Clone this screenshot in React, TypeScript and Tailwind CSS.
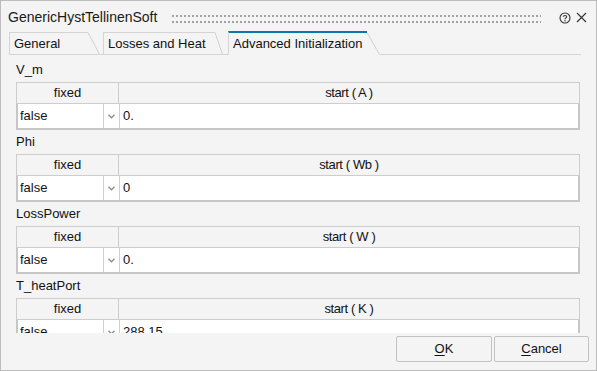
import React from "react";

type Group = { name: string; unit: string; value: string };

const groups: Group[] = [
  { name: "V_m", unit: "A", value: "0." },
  { name: "Phi", unit: "Wb", value: "0" },
  { name: "LossPower", unit: "W", value: "0." },
  { name: "T_heatPort", unit: "K", value: "288.15" },
];

function Slant({ w = 12, color = "#cfcfcf", bottom = true }: { w?: number; color?: string; bottom?: boolean }) {
  return (
    <svg width={w} height={23} className="shrink-0 block">
      <line x1={0} y1={0.5} x2={w - 0.5} y2={22.5} stroke={color} strokeWidth={1} />
      {bottom && <line x1={0} y1={22.5} x2={w} y2={22.5} stroke="#d4d4d4" strokeWidth={1} />}
    </svg>
  );
}

function Tab({ label, width, slant, active }: { label: string; width: number; slant: number; active?: boolean }) {
  return (
    <div className="flex items-end shrink-0">
      <div
        className={
          active
            ? "h-[24px] border-t-2 border-l border-t-[#0b78a9] border-l-[#d4d4d4] pl-[4px] flex items-center text-[13px] text-[#111]"
            : "h-[23px] border-t border-l border-b border-[#d4d4d4] pl-[4px] flex items-center text-[13px] text-[#111]"
        }
        style={{ width }}
      >
        {label}
      </div>
      <Slant w={slant} bottom={!active} />
    </div>
  );
}

function ParamGroup({ g }: { g: Group }) {
  return (
    <div className="flex flex-col">
      <div className="h-[24px] flex items-center text-[13px] text-[#111]">{g.name}</div>
      <div className="h-[22px] flex border border-[#cdcdcd] bg-[#f4f4f4] text-[13px] text-[#111]">
        <div className="w-[102px] border-r border-[#cdcdcd] flex items-center justify-center">fixed</div>
        <div className="flex-1 flex items-center justify-center tracking-[-0.4px]">
          start ( {g.unit} )
        </div>
      </div>
      <div className="h-[26px] flex border-x-2 border-b-2 border-[#c6c6c6] bg-[#d0d0d0] gap-px text-[13px] text-[#111]">
        <div className="w-[85px] bg-white flex items-center pl-[2px]">false</div>
        <div className="w-[15px] bg-white flex items-center justify-center">
          <svg width="7" height="5" viewBox="0 0 7 5">
            <path d="M0.5 0.8 L3.5 3.8 L6.5 0.8" fill="none" stroke="#8a8a8a" strokeWidth="1.3" />
          </svg>
        </div>
        <div className="flex-1 bg-white flex items-center pl-[3px]">{g.value}</div>
      </div>
    </div>
  );
}

export default function App() {
  return (
    <div
      className="w-[597px] h-[371px] bg-[#f4f4f4] border border-[#bcbcbc] flex flex-col overflow-hidden"
      style={{ fontFamily: '"Liberation Sans", Arial, sans-serif' }}
    >
      {/* title bar */}
      <div className="h-[30px] flex items-center pl-[7px] pr-[9px] shrink-0">
        <span className="text-[14px] text-[#1a1a1a] pt-[3px]">GenericHystTellinenSoft</span>
        <svg className="ml-[14px] flex-1 self-start mt-[11px]" height="13">
          <defs>
            <pattern id="dots" x="0" y="0" width="4" height="13" patternUnits="userSpaceOnUse">
              <rect x="1" y="3" width="2" height="2" fill="#a3a3a3" />
              <rect x="1" y="9" width="2" height="2" fill="#a3a3a3" />
            </pattern>
          </defs>
          <rect x="0" y="0" width="370" height="13" fill="url(#dots)" />
        </svg>
        <svg width="12" height="12" viewBox="0 0 12 12" className="ml-[8px] mt-[3px]">
          <circle cx="6" cy="6" r="5" fill="none" stroke="#333" strokeWidth="1.1" />
          <path d="M4.3 4.8 C4.3 3.1 7.7 3.1 7.7 4.8 C7.7 5.9 6 5.9 6 7.2" fill="none" stroke="#333" strokeWidth="1.1" />
          <circle cx="6" cy="8.8" r="0.7" fill="#333" />
        </svg>
        <svg width="11" height="11" viewBox="0 0 11 11" className="ml-[5px] mt-[3px]">
          <path d="M1 1 L10 10 M10 1 L1 10" stroke="#333" strokeWidth="1.1" />
        </svg>
      </div>

      {/* tabs */}
      <div className="h-[24px] flex items-end pl-[8px] pr-[15px] shrink-0">
        <Tab label="General" width={79} slant={12} />
        <div className="w-[3px] h-px bg-[#d4d4d4]" />
        <Tab label="Losses and Heat" width={112} slant={8} />
        <div className="w-[5px] h-px bg-[#d4d4d4]" />
        <Tab label="Advanced Initialization" width={139} slant={13} active />
        <div className="flex-1 h-px bg-[#d4d4d4]" />
      </div>

      {/* content */}
      <div className="h-[278px] overflow-hidden pl-[15px] pr-[16px] pt-[3px] shrink-0">
        {groups.map((g) => (
          <ParamGroup key={g.name} g={g} />
        ))}
      </div>

      {/* footer */}
      <div className="flex justify-end gap-[2px] pr-[7px] pt-[3px]">
        <button className="w-[96px] h-[26px] border border-[#c2c2c2] bg-[#f4f4f4] rounded-[2px] text-[13px] text-[#111]">
          <span className="underline underline-offset-2">O</span>K
        </button>
        <button className="w-[95px] h-[26px] border border-[#c2c2c2] bg-[#f4f4f4] rounded-[2px] text-[13px] text-[#111]">
          <span className="underline underline-offset-2">C</span>ancel
        </button>
      </div>
    </div>
  );
}
